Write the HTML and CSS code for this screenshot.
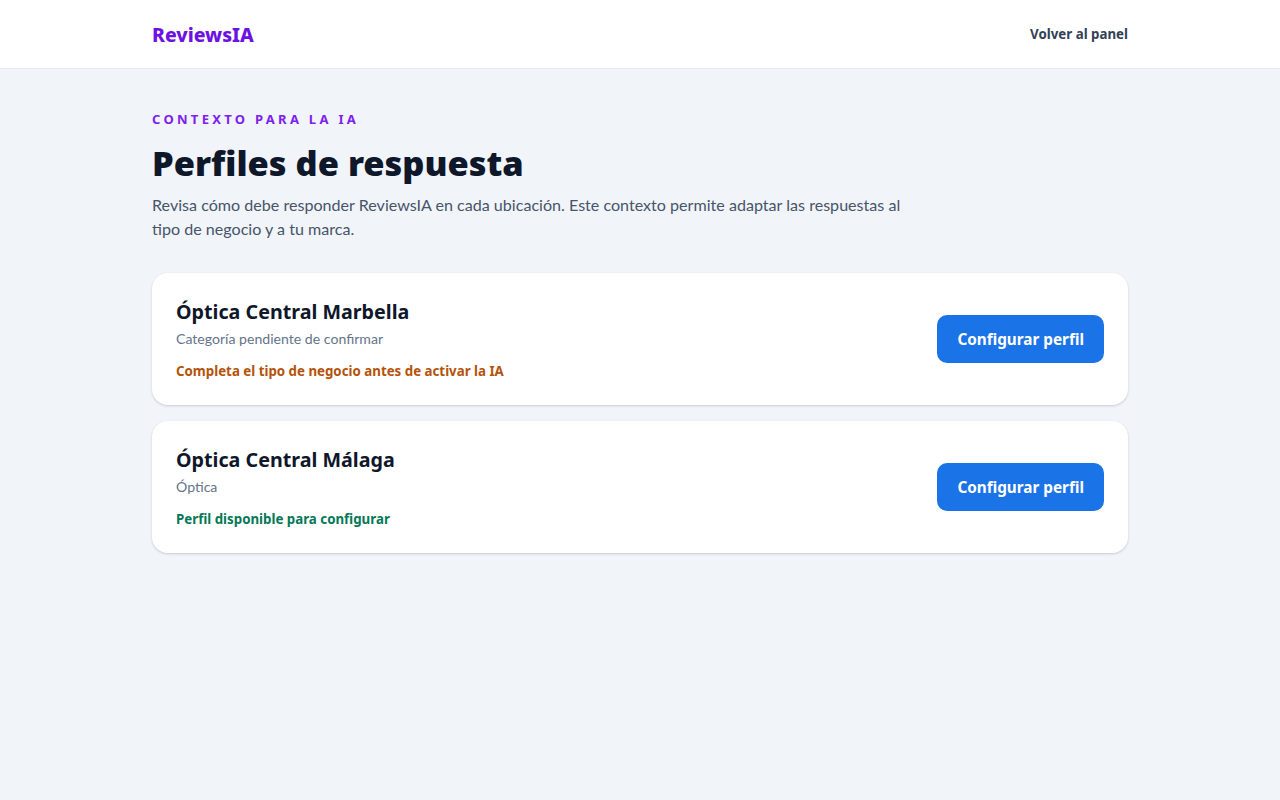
FILE: index.html
```html
<!DOCTYPE html>
<html lang="es">
<head>
<meta charset="utf-8">
<title>Perfiles de respuesta · ReviewsIA</title>
<link rel="stylesheet" href="styles.css">
</head>
<body>
<header class="topbar">
  <div class="container topbar-inner">
    <a class="logo" href="#">ReviewsIA</a>
    <a class="back" href="#">Volver al panel</a>
  </div>
</header>
<main class="container main">
  <p class="eyebrow">Contexto para la IA</p>
  <h1 class="title">Perfiles de respuesta</h1>
  <p class="lead">Revisa cómo debe responder ReviewsIA en cada ubicación. Este contexto permite adaptar las respuestas al tipo de negocio y a tu marca.</p>

  <section class="list">
    <article class="card">
      <div class="card-info">
        <h2 class="card-title">Óptica Central Marbella</h2>
        <p class="card-sub">Categoría pendiente de confirmar</p>
        <p class="status status-warn">Completa el tipo de negocio antes de activar la IA</p>
      </div>
      <a class="btn" href="#">Configurar perfil</a>
    </article>
    <article class="card">
      <div class="card-info">
        <h2 class="card-title">Óptica Central Málaga</h2>
        <p class="card-sub">Óptica</p>
        <p class="status status-ok">Perfil disponible para configurar</p>
      </div>
      <a class="btn" href="#">Configurar perfil</a>
    </article>
  </section>
</main>
</body>
</html>
```
FILE: styles.css
```css
* { box-sizing: border-box; }
html, body { margin: 0; padding: 0; }
body {
  background: #f1f4f9;
  font-family: Lato, "Noto Sans", "Liberation Sans", sans-serif;
  color: #0f172a;
  min-height: 800px;
}
a { text-decoration: none; }
.container {
  width: 976px;
  margin: 0 auto;
}
.topbar {
  background: #ffffff;
  border-bottom: 1px solid #e2e8f0;
  height: 69px;
}
.topbar-inner {
  height: 68px;
  display: flex;
  align-items: center;
  justify-content: space-between;
}
.logo,
.back,
.eyebrow,
.title,
.card-title,
.status,
.btn {
  font-family: "Noto Sans", "Open Sans", "Liberation Sans", sans-serif;
}
.logo {
  color: #6d12e0;
  font-weight: 800;
  font-size: 19.4px;
}
.back {
  color: #334155;
  font-weight: 700;
  font-size: 13.3px;
}
.main { padding-top: 40px; }
.eyebrow {
  margin: 0;
  color: #7c22ee;
  font-size: 13px;
  font-weight: 700;
  letter-spacing: 3.3px;
  text-transform: uppercase;
  line-height: 20px;
}
.title {
  margin: 12px 0 0;
  font-size: 34.4px;
  line-height: 44px;
  font-weight: 900;
  color: #0f172a;
}
.lead {
  margin: 8px 0 0;
  max-width: 760px;
  font-size: 16.1px;
  line-height: 24px;
  color: #475569;
}
.list {
  margin-top: 32px;
  display: flex;
  flex-direction: column;
  gap: 16px;
}
.card {
  background: #ffffff;
  border-radius: 16px;
  box-shadow: 0 1px 3px rgba(15, 23, 42, 0.12), 0 1px 2px rgba(15, 23, 42, 0.06);
  padding: 24px;
  height: 132px;
  display: flex;
  align-items: center;
  justify-content: space-between;
}
.card-title {
  margin: 0;
  font-size: 19.7px;
  line-height: 28px;
  font-weight: 700;
  color: #0f172a;
}
.card-sub {
  margin: 1px 0 0;
  font-size: 14.1px;
  line-height: 24px;
  color: #64748b;
}
.status {
  margin: 10px 0 0;
  font-size: 13.3px;
  line-height: 20px;
  font-weight: 700;
}
.status-warn { color: #b45309; }
.status-ok { color: #047857; }
.btn {
  background: #1b73e8;
  color: #ffffff;
  font-weight: 700;
  font-size: 15.3px;
  height: 48px;
  padding: 0 20px;
  border-radius: 10px;
  display: inline-flex;
  align-items: center;
}
```
